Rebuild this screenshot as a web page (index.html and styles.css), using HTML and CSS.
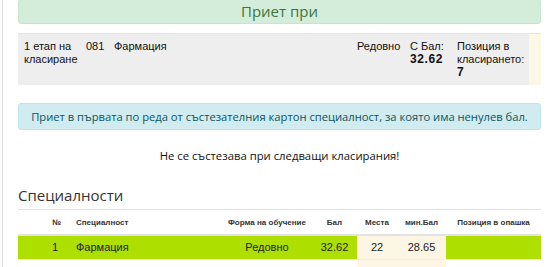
FILE: index.html
```html
<!DOCTYPE html>
<html lang="bg">
<head>
    <meta charset="UTF-8">
    <title>Класиране</title>
    <link rel="stylesheet" href="styles.css">
</head>
<body>
    <div class="page">
        <div class="alert alert-success">Приет при</div>

        <!-- ред от класирането -->
        <table class="result">
            <tr>
                <td class="c-stage">1 етап на класиране</td>
                <td class="c-code">081</td>
                <td class="c-name">Фармация</td>
                <td class="c-form">Редовно</td>
                <td class="c-score">С Бал:<br><b>32.62</b></td>
                <td class="c-pos">Позиция в класирането:<br><b>7</b></td>
                <td class="c-mark"></td>
            </tr>
        </table>

        <div class="alert alert-info">Приет в първата по реда от състезателния картон специалност, за която има ненулев бал.</div>

        <p class="note">Не се състезава при следващи класирания!</p>

        <h2>Специалности</h2>

        <table class="specs">
            <colgroup>
                <col style="width:26px">
                <col style="width:24px">
                <col style="width:154px">
                <col style="width:90px">
                <col style="width:45px">
                <col style="width:40px">
                <col style="width:49px">
                <col style="width:95px">
            </colgroup>
            <thead>
                <tr>
                    <th></th>
                    <th class="left">№</th>
                    <th class="left">Специалност</th>
                    <th>Форма на обучение</th>
                    <th>Бал</th>
                    <th>Места</th>
                    <th>мин.Бал</th>
                    <th>Позиция в опашка</th>
                </tr>
            </thead>
            <tbody>
                <tr class="admitted">
                    <td></td>
                    <td class="left">1</td>
                    <td class="left">Фармация</td>
                    <td>Редовно</td>
                    <td>32.62</td>
                    <td class="hl">22</td>
                    <td class="hl">28.65</td>
                    <td></td>
                </tr>
                <tr class="filler">
                    <td></td><td></td><td></td><td></td><td></td>
                    <td class="hl"></td><td class="hl"></td><td></td>
                </tr>
            </tbody>
        </table>
    </div>
</body>
</html>
```

FILE: styles.css
```css
* {
    margin: 0;
    padding: 0;
    box-sizing: border-box;
}

body {
    background: #fff;
    font-family: 'Open Sans', 'Noto Sans', sans-serif;
    color: #222;
    overflow: hidden;
}

.page {
    margin-left: 2px;
    border-left: 1px solid #ddd;
    padding: 0 7px 0 15px;
    height: 267px;
    overflow: hidden;
}

.alert {
    border: 1px solid;
    border-radius: 3px;
    text-align: center;
}

.alert-success {
    margin-top: -1px;
    padding: 1px 0 2px;
    line-height: 20px;
    font-size: 15px;
    background-color: #d4edda;
    border-color: #c3e6cb;
    color: #3c763d;
}

.alert-info {
    margin-top: 18px;
    padding: 6px 0;
    line-height: 13px;
    font-size: 11.2px;
    background-color: #d1ecf1;
    border-color: #bee5eb;
    color: #0c5460;
}

.result {
    width: 100%;
    margin-top: 9px;
    border-collapse: collapse;
    background: #eee;
    border-top: 1px solid #e4e4e4;
    font-family: 'Liberation Sans', Arial, sans-serif;
    font-size: 11px;
    line-height: 13px;
    color: #111;
}

.result td {
    vertical-align: top;
    padding: 6px 3px;
}

.result b {
    font-size: 12px;
    letter-spacing: 0.6px;
}

.c-stage { width: 65px; padding-left: 6px !important; }
.c-code { width: 28px; }
.c-form { width: 53px; }
.c-score { width: 47px; }
.c-pos { width: 75px; }
.c-mark { width: 12px; background: #fdf8e6; }

.note {
    margin-top: 18px;
    text-align: center;
    font-size: 11.3px;
    line-height: 16px;
    color: #111;
}

h2 {
    margin-top: 21px;
    padding-bottom: 4px;
    border-bottom: 1px solid #e2e2e2;
    font-size: 15px;
    font-weight: normal;
    line-height: 20px;
    color: #333;
}

.specs {
    width: 100%;
    table-layout: fixed;
    border-collapse: collapse;
    font-family: 'Liberation Sans', Arial, sans-serif;
}

.specs th {
    height: 25px;
    font-size: 8px;
    font-weight: bold;
    color: #333;
    text-align: center;
    white-space: nowrap;
    border-bottom: 2px solid #e2e2e2;
}

.specs td {
    height: 24px;
    font-size: 11px;
    color: #222;
    text-align: center;
}

.specs .left {
    text-align: left;
    padding-left: 8px;
}

.admitted td {
    background: #addf00;
}

.admitted td.hl,
.filler td.hl {
    background: #fdf6e4;
}

.filler td {
    height: 10px;
    border-top: 1px solid #eee;
}
```
